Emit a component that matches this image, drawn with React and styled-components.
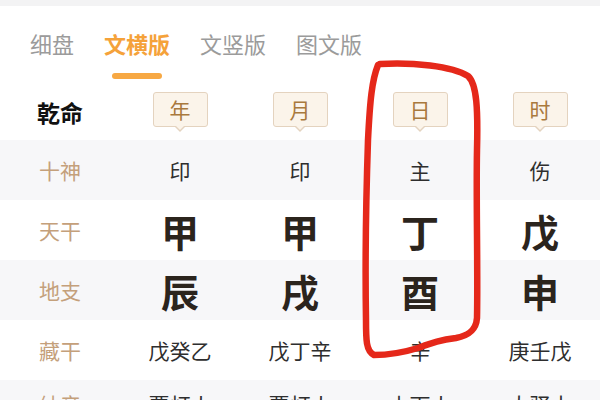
import React from 'react';
import styled, { createGlobalStyle } from 'styled-components';

const GlobalStyle = createGlobalStyle`
  html, body {
    margin: 0;
    padding: 0;
    background: #ffffff;
  }
  body {
    font-family: "Noto Sans CJK SC", "Noto Sans", sans-serif;
  }
`;

const Page = styled.div`
  position: relative;
  width: 600px;
  height: 400px;
  overflow: hidden;
  background: #ffffff;
`;

const TopStrip = styled.div`
  height: 6px;
  background: #f3f3f4;
`;

const TabBar = styled.div`
  display: flex;
  gap: 30px;
  padding: 22px 0 0 30px;
  box-sizing: border-box;
  height: 74px;
`;

const Tab = styled.div`
  position: relative;
  font-size: 22px;
  line-height: 30px;
  color: ${(p) => (p.$active ? '#f5a23a' : '#9b9b9b')};
  font-weight: ${(p) => (p.$active ? 600 : 400)};

  &::after {
    content: '';
    display: ${(p) => (p.$active ? 'block' : 'none')};
    position: absolute;
    left: 50%;
    top: 45px;
    width: 50px;
    height: 6px;
    margin-left: -25px;
    border-radius: 3px;
    background: #f7a843;
  }
`;

const Row = styled.div`
  display: grid;
  grid-template-columns: 120px repeat(4, 120px);
  align-items: center;
  justify-items: center;
  height: 60px;
  box-sizing: border-box;
  padding-bottom: ${(p) => (p.$lift ? 12 : 0)}px;
  background: ${(p) => (p.$shade ? '#f7f7f9' : '#ffffff')};
`;

const Title = styled.div`
  font-size: 23px;
  font-weight: 700;
  color: #111111;
  margin-top: 4px;
`;

const Badge = styled.div`
  position: relative;
  width: 55px;
  height: 35px;
  box-sizing: border-box;
  margin-top: -2px;
  border: 1px solid #e4d3bf;
  border-radius: 3px;
  background: #fbf4ea;
  color: #a9793d;
  font-size: 21px;
  line-height: 33px;
  text-align: center;

  &::before,
  &::after {
    content: '';
    position: absolute;
    left: 50%;
    width: 0;
    height: 0;
    border-left: 5px solid transparent;
    border-right: 5px solid transparent;
    margin-left: -5px;
  }
  &::before {
    bottom: -6px;
    border-top: 5px solid #e4d3bf;
  }
  &::after {
    bottom: -4px;
    border-top: 5px solid #fbf4ea;
  }
`;

const Label = styled.div`
  font-size: 21px;
  color: #c4a07b;
`;

const Cell = styled.div`
  font-size: ${(p) => (p.$big ? 38 : 21)}px;
  font-weight: ${(p) => (p.$big ? 700 : 400)};
  color: ${(p) => (p.$big ? '#2b241d' : '#2e2e2e')};
`;

const Marker = styled.svg`
  position: absolute;
  left: 0;
  top: 0;
  pointer-events: none;
`;

const rows = [
  { label: '十神', cells: ['印', '印', '主', '伤'], shade: true },
  { label: '天干', cells: ['甲', '甲', '丁', '戊'], big: true },
  { label: '地支', cells: ['辰', '戌', '酉', '申'], big: true, shade: true },
  { label: '藏干', cells: ['戊癸乙', '戊丁辛', '辛', '庚壬戊'] },
  { label: '纳音', cells: ['覆灯火', '覆灯火', '山下火', '大驿土'], shade: true, lift: true },
];

const tabs = ['细盘', '文横版', '文竖版', '图文版'];
const pillars = ['年', '月', '日', '时'];

export default function App() {
  return (
    <Page>
      <GlobalStyle />
      <TopStrip />
      <TabBar>
        {tabs.map((t, i) => (
          <Tab key={t} $active={i === 1}>{t}</Tab>
        ))}
      </TabBar>
      <Row>
        <Title>乾命</Title>
        {pillars.map((p) => (
          <Badge key={p}>{p}</Badge>
        ))}
      </Row>
      {rows.map((r) => (
        <Row key={r.label} $shade={r.shade} $lift={r.lift}>
          <Label>{r.label}</Label>
          {r.cells.map((c, i) => (
            <Cell key={i} $big={r.big}>{c}</Cell>
          ))}
        </Row>
      ))}
      <Marker width="600" height="400" viewBox="0 0 600 400">
        <path
          d="M380 64 C 412 62, 452 66, 468 76 C 477 84, 478 110, 477 150 C 476 200, 478 270, 477 318 C 476 332, 466 336, 456 338 C 440 340, 432 343, 418 348 C 405 352, 390 355, 374 355 C 366 351, 366 340, 366 320 C 365 260, 366 200, 368 140 C 370 100, 372 80, 378 65"
          fill="none"
          stroke="#e5281a"
          strokeWidth="6.5"
          strokeLinecap="round"
          strokeLinejoin="round"
        />
      </Marker>
    </Page>
  );
}
